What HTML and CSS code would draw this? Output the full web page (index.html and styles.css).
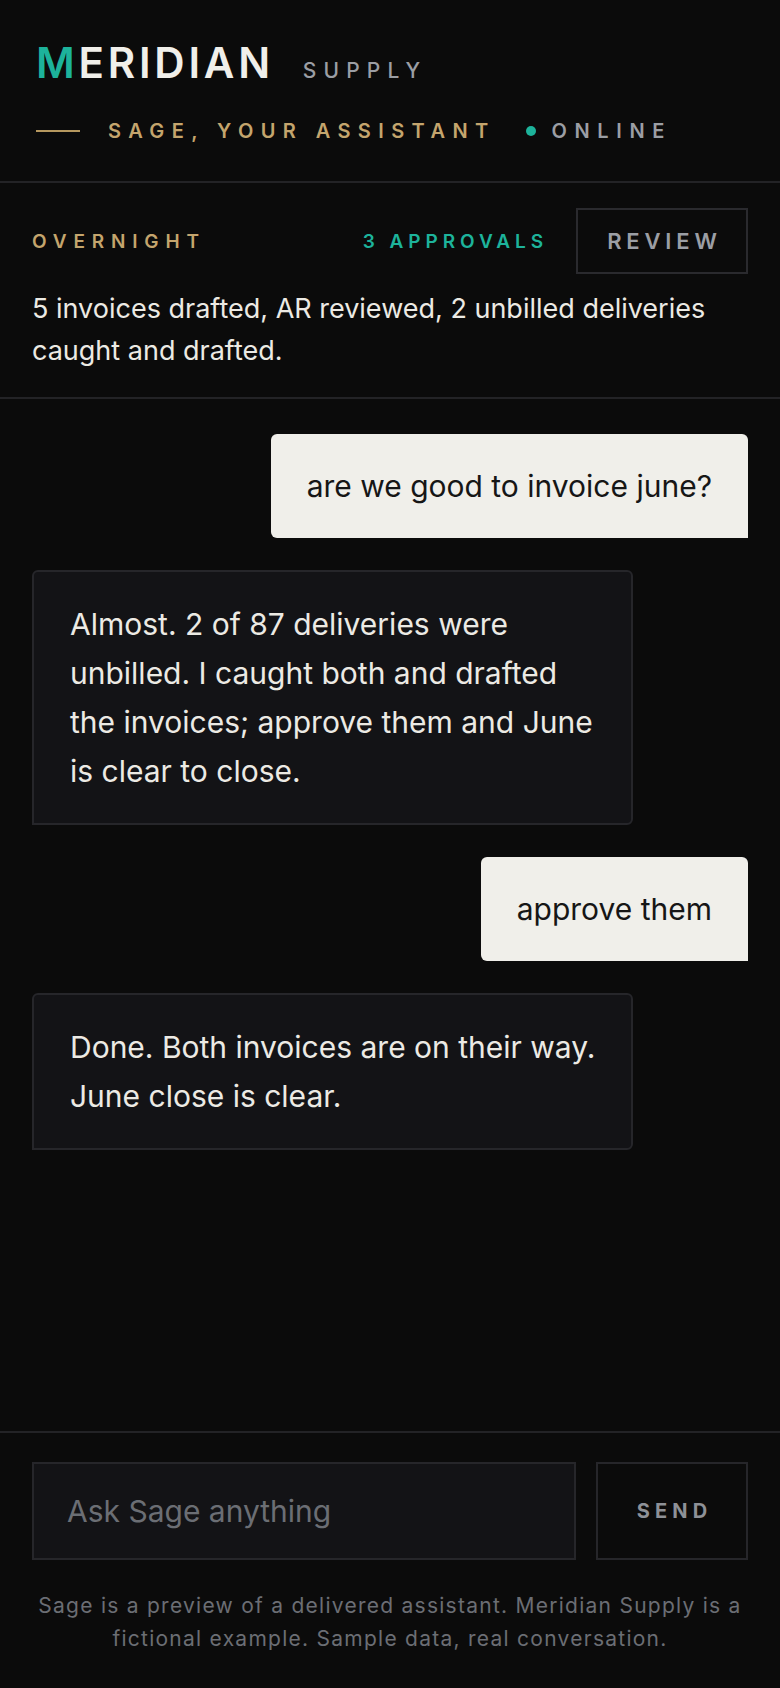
FILE: index.html
```html
<!DOCTYPE html>
<html lang="en">
  <head>
    <meta charset="UTF-8" />
    <meta name="viewport" content="width=device-width, initial-scale=1.0" />
    <title>Sage - Meridian Supply</title>
    <link rel="stylesheet" href="styles.css">
  </head>
  <body>
    <header class="top">
      <div class="brand">
        <h1 class="brand-name"><span class="brand-m">M</span>ERIDIAN</h1>
        <span class="brand-sub">SUPPLY</span>
      </div>
      <div class="tagline">
        <span class="tag-rule"></span>
        <span class="tag-text">SAGE, YOUR ASSISTANT</span>
        <span class="status"><span class="status-dot"></span>ONLINE</span>
      </div>
    </header>

    <section class="overnight">
      <div class="overnight-row">
        <span class="label-gold">OVERNIGHT</span>
        <span class="label-teal">3 APPROVALS</span>
        <button class="btn-review">REVIEW</button>
      </div>
      <p class="overnight-text">5 invoices drafted, AR reviewed, 2 unbilled deliveries caught and drafted.</p>
    </section>

    <main class="chat">
      <div class="msg msg-user">are we good to invoice june?</div>
      <div class="msg msg-bot">Almost. 2 of 87 deliveries were unbilled. I caught both and drafted the invoices; approve them and June is clear to close.</div>
      <div class="msg msg-user">approve them</div>
      <div class="msg msg-bot">Done. Both invoices are on their way. June close is clear.</div>
    </main>

    <footer class="composer">
      <form class="composer-row" onsubmit="return false;">
        <input type="text" class="composer-input" placeholder="Ask Sage anything" />
        <button class="btn-send">SEND</button>
      </form>
      <p class="disclaimer">Sage is a preview of a delivered assistant. Meridian Supply is a fictional example. Sample data, real conversation.</p>
    </footer>
  </body>
</html>
```

FILE: styles.css
```css
* {
  margin: 0;
  padding: 0;
  box-sizing: border-box;
}
body {
  display: flex;
  flex-direction: column;
  min-height: 100vh;
  background-color: #0b0b0b;
  color: #eceae4;
  font-family: "Inter", "Liberation Sans", sans-serif;
}

/* header */
.top {
  padding: 42px 36px 38px;
  border-bottom: 2px solid #232326;
}
.brand {
  display: flex;
  align-items: baseline;
  gap: 29px;
}
.brand-name {
  font-size: 42px;
  line-height: 42px;
  font-weight: 600;
  letter-spacing: 0.09em;
  color: #f0efea;
}
.brand-m {
  color: #1db39b;
}
.brand-sub {
  font-size: 21px;
  font-weight: 500;
  letter-spacing: 0.34em;
  color: #9b9ea4;
}
.tagline {
  display: flex;
  align-items: center;
  margin-top: 35px;
  line-height: 24px;
}
.tag-rule {
  width: 44px;
  height: 2px;
  background-color: #b6985f;
  margin-right: 28px;
}
.tag-text {
  font-size: 20px;
  font-weight: 600;
  letter-spacing: 0.37em;
  color: #c4a56d;
}
.status {
  display: flex;
  align-items: center;
  gap: 16px;
  margin-left: 30px;
  font-size: 20px;
  font-weight: 600;
  letter-spacing: 0.38em;
  color: #9b9ea4;
}
.status-dot {
  width: 10px;
  height: 10px;
  border-radius: 50%;
  background-color: #1db39b;
}

/* overnight summary */
.overnight {
  padding: 25px 32px;
  border-bottom: 2px solid #232326;
}
.overnight-row {
  display: flex;
  align-items: center;
}
.label-gold,
.label-teal {
  font-size: 19px;
  font-weight: 600;
}
.label-gold {
  color: #c4a56d;
  letter-spacing: 0.36em;
  margin-right: auto;
}
.label-teal {
  color: #1db39b;
  letter-spacing: 0.26em;
  margin-right: 28px;
}
.btn-review {
  width: 172px;
  height: 66px;
  background: transparent;
  border: 2px solid #2a2a2e;
  color: #9b9ea4;
  font-family: inherit;
  font-size: 22px;
  font-weight: 600;
  letter-spacing: 0.22em;
  padding-left: 0.22em;
  cursor: pointer;
}
.overnight-text {
  margin-top: 14px;
  font-size: 27px;
  line-height: 42px;
  color: #eceae4;
}

/* chat */
.chat {
  flex: 1;
  display: flex;
  flex-direction: column;
  gap: 32px;
  padding: 35px 32px;
}
.msg {
  font-size: 30px;
  line-height: 49px;
  padding: 27.5px 36px;
  border-radius: 6px;
}
.msg-user {
  align-self: flex-end;
  background-color: #f0efea;
  color: #161616;
  border-bottom-right-radius: 0;
}
.msg-bot {
  align-self: flex-start;
  max-width: 84%;
  background-color: #131316;
  border: 2px solid #26262a;
  color: #eceae4;
  border-bottom-left-radius: 0;
}

/* composer */
.composer {
  padding: 29px 32px 33px;
  border-top: 2px solid #232326;
}
.composer-row {
  display: flex;
  gap: 20px;
}
.composer-input {
  flex: 1;
  height: 98px;
  padding: 0 33px;
  background-color: #131316;
  border: 2px solid #26262a;
  color: #eceae4;
  font-family: inherit;
  font-size: 30px;
  outline: none;
}
.composer-input::placeholder {
  color: #6b6e74;
}
.btn-send {
  width: 152px;
  height: 98px;
  background: transparent;
  border: 2px solid #26262a;
  color: #8e9197;
  font-family: inherit;
  font-size: 20px;
  font-weight: 700;
  letter-spacing: 0.26em;
  padding-left: 0.26em;
  cursor: pointer;
}
.disclaimer {
  margin-top: 29px;
  text-align: center;
  font-size: 21px;
  line-height: 33px;
  letter-spacing: 0.06em;
  color: #6b6e74;
}
```
